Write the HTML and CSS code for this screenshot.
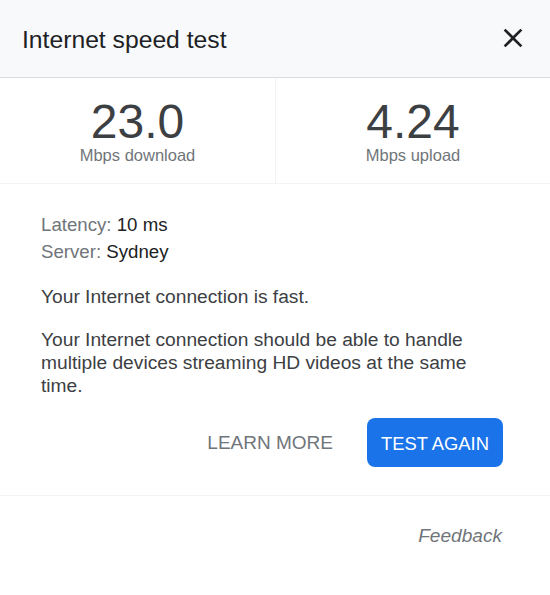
FILE: index.html
```html
<!DOCTYPE html>
<html lang="en">
<head>
<meta charset="utf-8">
<title>Internet speed test</title>
<link rel="stylesheet" href="styles.css">
</head>
<body>
<div class="dialog">
  <header class="header">
    <h1 class="title">Internet speed test</h1>
    <button class="close" aria-label="Close">
      <svg viewBox="0 0 24 24" width="32" height="32"><path d="M19 6.41L17.59 5 12 10.59 6.41 5 5 6.41 10.59 12 5 17.59 6.41 19 12 13.41 17.59 19 19 17.59 13.41 12z"/></svg>
    </button>
  </header>
  <section class="stats">
    <div class="stat">
      <div class="stat-value">23.0</div>
      <div class="stat-label">Mbps download</div>
    </div>
    <div class="stat">
      <div class="stat-value">4.24</div>
      <div class="stat-label">Mbps upload</div>
    </div>
  </section>
  <section class="details">
    <div class="meta">
      <div class="meta-row"><span class="meta-label">Latency:</span> 10 ms</div>
      <div class="meta-row"><span class="meta-label">Server:</span> Sydney</div>
    </div>
    <p class="para">Your Internet connection is fast.</p>
    <p class="para">Your Internet connection should be able to handle multiple devices streaming HD videos at the same time.</p>
    <div class="actions">
      <button class="btn btn-text">LEARN MORE</button>
      <button class="btn btn-primary">TEST AGAIN</button>
    </div>
  </section>
  <footer class="footer">
    <a class="feedback">Feedback</a>
  </footer>
</div>
</body>
</html>
```
FILE: styles.css
```css
* { box-sizing: border-box; }
html, body {
  margin: 0;
  padding: 0;
  background: #ffffff;
}
body {
  font-family: "Liberation Sans", Arial, sans-serif;
  color: #202124;
}
.dialog {
  width: 550px;
}
.header {
  height: 78px;
  background: #f8f9fa;
  border-bottom: 1px solid #dadce0;
  display: flex;
  align-items: center;
  justify-content: space-between;
  padding: 0 22px 0 22px;
}
.title {
  margin: 2px 0 0 0;
  font-size: 24.7px;
  font-weight: normal;
  line-height: 30px;
  color: #202124;
}
.close {
  border: 0;
  background: transparent;
  padding: 0;
  width: 32px;
  height: 32px;
  margin-right: -0.5px;
  margin-top: -2px;
  display: flex;
  fill: #202124;
}
.stats {
  display: grid;
  grid-template-columns: 275px 1fr;
  border-bottom: 1px solid #f1f3f4;
}
.stat {
  text-align: center;
  padding: 21px 0 18px;
}
.stat + .stat {
  border-left: 1px solid #f1f3f4;
}
.stat-value {
  font-size: 48px;
  line-height: 46px;
  color: #3c4043;
}
.stat-label {
  margin-top: 1px;
  font-size: 16.5px;
  line-height: 19px;
  color: #70757a;
}
.details {
  padding: 27px 47px 28px 41px;
  border-bottom: 1px solid #f1f3f4;
  font-size: 18.67px;
  color: #3c4043;
}
.meta-row {
  line-height: 27px;
  color: #202124;
}
.meta-label {
  color: #70757a;
}
.para {
  margin: 20px 0 0;
  font-size: 19.2px;
  line-height: 23px;
}
.actions {
  display: flex;
  justify-content: flex-end;
  gap: 21px;
  margin-top: 21px;
}
.btn {
  font-family: "Liberation Sans", Arial, sans-serif;
  font-size: 18.67px;
  height: 49px;
  padding: 0 13px;
  border: 0;
  border-radius: 8px;
  background: transparent;
  cursor: pointer;
}
.btn-text {
  color: #70757a;
  font-size: 19px;
}
.btn-primary {
  background: #1a73e8;
  color: #ffffff;
  width: 136px;
  font-size: 18.4px;
  padding: 2px 0 0;
}
.footer {
  display: flex;
  justify-content: flex-end;
  padding: 28px 48px 0 0;
}
.feedback {
  font-style: italic;
  font-size: 19.1px;
  line-height: 23px;
  color: #70757a;
}
```
